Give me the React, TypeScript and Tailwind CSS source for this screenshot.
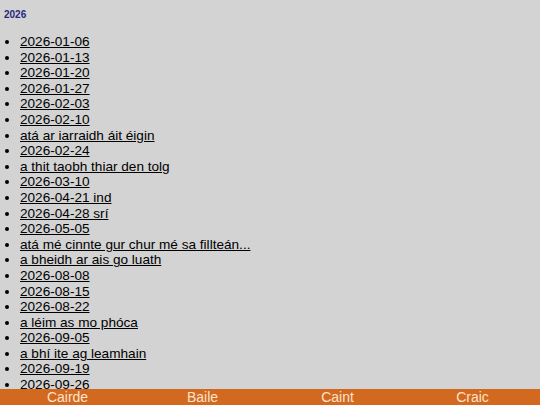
const entries = [
  '2026-01-06',
  '2026-01-13',
  '2026-01-20',
  '2026-01-27',
  '2026-02-03',
  '2026-02-10',
  'atá ar iarraidh áit éigin',
  '2026-02-24',
  'a thit taobh thiar den tolg',
  '2026-03-10',
  '2026-04-21 ind',
  '2026-04-28 srí',
  '2026-05-05',
  'atá mé cinnte gur chur mé sa fillteán...',
  'a bheidh ar ais go luath',
  '2026-08-08',
  '2026-08-15',
  '2026-08-22',
  'a léim as mo phóca',
  '2026-09-05',
  'a bhí ite ag leamhain',
  '2026-09-19',
  '2026-09-26',
];

const nav = ['Cairde', 'Baile', 'Caint', 'Craic'];

export default function App() {
  return (
    <div className="min-h-screen bg-[#d3d3d3] text-black font-['Liberation_Sans',Arial,sans-serif] pb-4">
      <h1 className="px-1 pt-[9px] text-[10px] leading-[12px] font-bold text-[#28287c]">2026</h1>

      {/* archive list */}
      <ul className="mt-[13px] pl-[20px] list-disc text-[13.6px] leading-[15.6px]">
        {entries.map((e, i) => (
          <li key={i}>
            <a href="#" className="underline text-black">
              {e}
            </a>
          </li>
        ))}
      </ul>

      <footer className="fixed bottom-0 left-0 right-0 h-[16px] bg-[#d2691e] grid grid-cols-4 text-[14px] leading-[16px] text-[#fde3cf]">
        {nav.map(n => (
          <a key={n} href="#" className="text-center">
            {n}
          </a>
        ))}
      </footer>
    </div>
  );
}
